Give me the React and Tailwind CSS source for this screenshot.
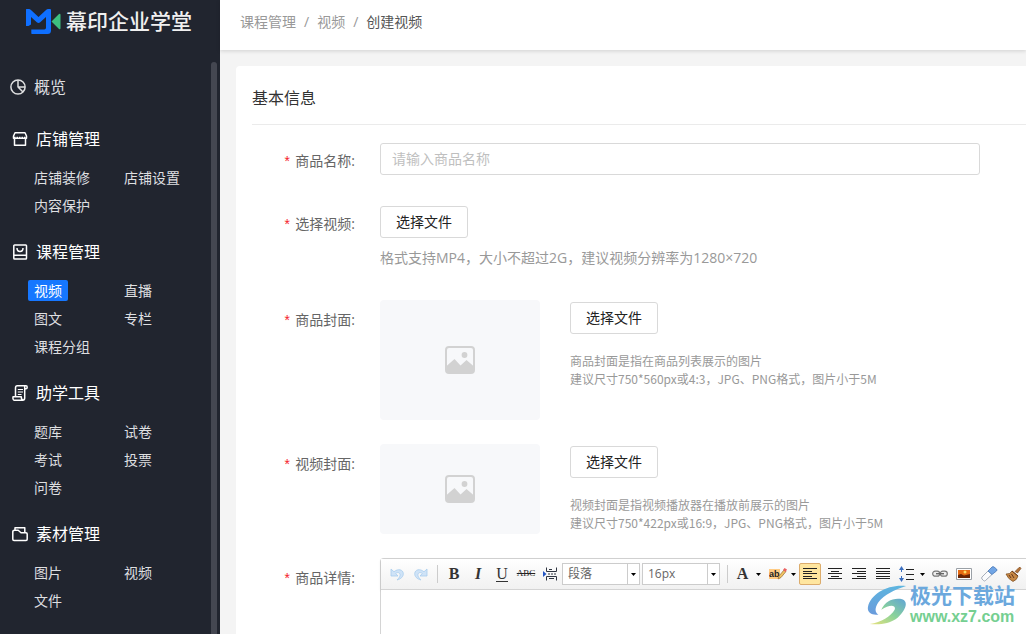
import React from "react";

const stroke = { fill: "none", stroke: "currentColor", strokeWidth: 1.5, strokeLinejoin: "round" };

const PieIcon = () => (
  <svg width="16" height="16" viewBox="0 0 16 16" {...stroke}>
    <circle cx="8" cy="8" r="7.1" />
    <path d="M8 1v7h7M8 8l5 5" />
  </svg>
);
const ShopIcon = () => (
  <svg width="16" height="16" viewBox="0 0 16 16" {...stroke}>
    <path d="M3 1.8h10l1.5 3.2v2.300H1.500V5zM2.500 7.500v6.800h11V7.500" />
    <path d="M2 6.800h12" strokeDasharray="1.500 1" strokeWidth="2.200" />
  </svg>
);
const CourseIcon = () => (
  <svg width="16" height="16" viewBox="0 0 16 16" {...stroke}>
    <rect x="1.8" y="1" width="12.700" height="14" rx="0.8" />
    <path d="M2 11.300h12.500M5 4c0 4.700 6 4.700 6 0" />
  </svg>
);
const ScrollIcon = () => (
  <svg width="16" height="16" viewBox="0 0 16 16" {...stroke}>
    <path d="M3.500 11.500V3c0-1.400.6-2.200 1.800-2.200H14c1.600 0 1.600 3 0 3h-1.300M12.700 1.500V13c0 1.400-.8 2.200-2 2.200H2.300c-1.300 0-1.500-1.700-1.300-3.400h8.300c0 2 .3 3.200 1.700 3.200" />
    <path d="M5.800 4.500H11M5.800 7H11M5.800 9.500h3.700" strokeWidth="1.200" />
  </svg>
);
const FolderIcon = () => (
  <svg width="16" height="16" viewBox="0 0 16 16" {...stroke}>
    <path d="M2.500 4.300h3.700l2.800 2.400h5q1.200 0 1.200 1.200v5.400q0 1.200-1.200 1.200H2q-1.200 0-1.200-1.200V5.500q0-1.200 1.700-1.200z" />
    <path d="M3 4.300V1.800h9.800v4.900" />
  </svg>
);

const sections = [
  { title: "店铺管理", Icon: ShopIcon, items: ["店铺装修", "店铺设置", "内容保护"] },
  { title: "课程管理", Icon: CourseIcon, items: ["视频", "直播", "图文", "专栏", "课程分组"], active: "视频" },
  { title: "助学工具", Icon: ScrollIcon, items: ["题库", "试卷", "考试", "投票", "问卷"] },
  { title: "素材管理", Icon: FolderIcon, items: ["图片", "视频", "文件"] },
];

function Logo() {
  return (
    <div className="flex h-[62px] shrink-0 items-start pl-6 pt-[5px]">
      <svg width="38" height="32" viewBox="0 0 38 32" className="shrink-0">
        <path
          d="M2 21V4.500q0-.5.500-.5H5q1 0 1.700.7L14.500 12l7.800-7.300Q23 4 24 4h2q1 0 1 1v20.500q0 3.500-3.500 3.500H8q-.7 0-.7-.7v-3.800h13q1.700 0 1.700-1.700V12l-5.800 5.300q-1.700 1.400-3.400 0L7 12v7.500L4.500 21z"
          fill="#0f6fff"
        />
        <path d="M27.500 16.500L35 9q1.500-1 1.500 1v13q0 2-1.500 1z" fill="#3dc07f" />
      </svg>
      <span className="ml-1 text-[21px] font-medium leading-8 text-[#f0f0f0]">幕印企业学堂</span>
    </div>
  );
}

function Sidebar() {
  return (
    <aside className="flex w-[220px] shrink-0 flex-col bg-[#21252f] text-[#dedfe0]">
      <Logo />
      <div className="flex min-h-0 grow">
        <nav className="flex min-w-0 grow flex-col gap-[9px] overflow-hidden pt-[5px]">
          <a href="#overview" className="flex h-[39px] items-center gap-2 pl-[10px] text-base">
            <PieIcon />
            概览
          </a>
          {sections.map(({ title, Icon, items, active }) => (
            <section key={title}>
              <h2 className="flex h-12 items-center gap-2 pl-3 text-base text-white">
                <Icon />
                {title}
              </h2>
              <ul className="grid grid-cols-[90px_90px] pl-7 text-sm">
                {items.map((item) => (
                  <li key={item} className="flex h-7 items-center">
                    <a
                      href={"#" + item}
                      className={
                        item === active
                          ? "rounded-xs bg-[#1677ff] px-[6px] leading-[21px] text-white"
                          : "whitespace-nowrap px-[6px] leading-[21px]"
                      }
                    >
                      {item}
                    </a>
                  </li>
                ))}
              </ul>
            </section>
          ))}
        </nav>
        <div className="mr-[3px] w-[6px] shrink-0 rounded-t-full bg-[#444751]" />
      </div>
    </aside>
  );
}

function Row({ id, label, className = "", labelHeight = "h-10", children }) {
  return (
    <div className={"flex items-start " + className}>
      <label htmlFor={id} className={"flex w-32 shrink-0 items-center justify-end pr-[25px] text-sm text-[#666] " + labelHeight}>
        <span className="mr-1 pt-1 font-['Liberation_Mono'] text-[#f5222d]">*</span>
        {label}:
      </label>
      {children}
    </div>
  );
}

const FileButton = ({ id }) => (
  <button
    id={id}
    type="button"
    className="flex h-8 w-[88px] items-center justify-center rounded-[3px] border border-[#d9d9d9] bg-white text-sm text-[#222]"
  >
    选择文件
  </button>
);

function Cover({ id, box, line1, line2 }) {
  return (
    <div className="flex">
      <div className={"flex w-40 shrink-0 items-center justify-center rounded bg-[#f7f8fa] " + box}>
        <svg width="30" height="28" viewBox="0 0 30 28">
          <rect x="1" y="1" width="28" height="26" rx="3" fill="none" stroke="#d2d2d2" strokeWidth="2" />
          <path d="M1 20.500L9.500 13l6 6.500 6-5.500 7.500 6.500v4q0 2.500-2.500 2.500h-23Q1 27 1 24.500z" fill="#d2d2d2" />
          <circle cx="19.500" cy="9" r="2.900" fill="#d2d2d2" />
        </svg>
      </div>
      <div className="ml-[30px] pt-[2px]">
        <FileButton id={id} />
        <p className="mt-[18px] whitespace-nowrap font-['Noto_Sans_CJK_SC',sans-serif] text-xs leading-[18px] text-[#999]">
          {line1}
          <br />
          {line2}
        </p>
      </div>
    </div>
  );
}

const Tool = ({ label, className = "w-6", children }) => (
  <button
    type="button"
    aria-label={label}
    className={"flex h-[22px] shrink-0 items-center justify-center font-['Liberation_Serif'] text-base text-[#333] " + className}
  >
    {children}
  </button>
);

const Caret = () => (
  <svg width="5" height="3" viewBox="0 0 5 3" className="shrink-0">
    <path d="M0 0h5L2.500 3z" fill="#000" />
  </svg>
);

const Separator = ({ className }) => (
  <span className={"flex shrink-0 justify-center " + className}>
    <span className="h-[18px] w-px bg-[#ccc]" />
  </span>
);

const Lines = ({ d }) => (
  <svg width="14" height="12" viewBox="0 0 14 12">
    <path d={d} stroke="#222" strokeWidth="1" fill="none" />
  </svg>
);

const ToolSelect = ({ label, value }) => (
  <span className="relative mr-[2px] flex h-[22px] w-[78px] shrink-0 border border-[#ccc] bg-white">
    <select aria-label={label} defaultValue={value} className="w-full appearance-none bg-transparent pl-[5px] text-xs leading-5 text-[#666]">
      <option>{value}</option>
    </select>
    <span className="pointer-events-none absolute inset-y-0 right-0 flex w-3 items-center justify-center border-l border-[#ccc]">
      <Caret />
    </span>
  </span>
);

const Undo = ({ flip }) => (
  <svg width="14" height="13" viewBox="0 0 14 13" className={flip ? "-scale-x-100" : ""}>
    <path d="M1 1v7h7L5.700 5.500C8 3.500 10.500 5 10 7.500c-.3 1.700-1.500 3-3 4.500 4-1 6.500-3.500 6.300-6.500C13 1.500 8 .2 4 3.800z" fill="#cfe3f7" stroke="#a8cdee" strokeWidth="0.8" />
  </svg>
);

function Editor() {
  return (
    <div className="flex h-full min-w-0 grow flex-col rounded-tl border-l border-t border-[#d4d4d4]">
      <div className="flex h-[31px] shrink-0 items-center overflow-hidden border-b border-[#d4d4d4] bg-linear-to-b from-white to-[#f1f1f1] pl-1 shadow-sm">
        <Tool label="撤销"><Undo /></Tool>
        <Tool label="重做"><Undo flip /></Tool>
        <Separator className="w-[9px]" />
        <Tool label="加粗"><b>B</b></Tool>
        <Tool label="斜体"><b><i>I</i></b></Tool>
        <Tool label="下划线"><span className="border-b border-[#333] leading-[14px]">U</span></Tool>
        <Tool label="删除线"><span className="text-[9px] text-[#222] line-through">ABC</span></Tool>
        <Tool label="分页">
          <svg width="15" height="14" viewBox="0 0 15 14">
            <path d="M0 4l3.500 3L0 10z" fill="#2456c4" />
            <path d="M3.500.5v4h10v-4M3.500 13.500v-4h10v4" fill="none" stroke="#303642" />
            <path d="M5 7h2m1 0h2m1 0h2M6 2.500h3M6 11.500h5" fill="none" stroke="#303642" />
          </svg>
        </Tool>
        <ToolSelect label="段落格式" value="段落" />
        <ToolSelect label="字号" value="16px" />
        <Separator className="w-[10px]" />
        <Tool label="字体颜色" className="w-[34px] gap-2"><b>A</b><Caret /></Tool>
        <Tool label="背景色" className="w-8 gap-1">
          <svg width="18" height="14" viewBox="0 0 18 14">
            <rect y="2" width="11" height="10" fill="#ffcb83" />
            <text x="0" y="10" fontSize="9" fontWeight="bold" fontFamily="Liberation Sans" fill="#222">ab</text>
            <path d="M9 12l1-3 5-6 2 1.500-5 6z" fill="#f0c463" stroke="#966b35" strokeWidth="0.7" />
            <path d="M14 3l1.500-2L18 2.500 16.500 5z" fill="#ea6060" />
          </svg>
          <Caret />
        </Tool>
        <Tool label="左对齐" className="ml-px mr-[2px] w-[22px] rounded-xs border border-[#dcac6c] bg-[#ffe69f]">
          <Lines d="M0 .5h14M0 3.500h9M0 5.500h14M0 8.500h9M0 10.500h14" />
        </Tool>
        <Tool label="居中"><Lines d="M0 .5h14M3 3.500h8M0 5.500h14M3 8.500h8M0 10.500h14" /></Tool>
        <Tool label="右对齐"><Lines d="M0 .5h14M5 3.500h9M0 5.500h14M5 8.500h9M0 10.500h14" /></Tool>
        <Tool label="两端对齐"><Lines d="M0 .5h14M0 3.500h14M0 5.500h14M0 8.500h14M0 10.500h14" /></Tool>
        <Tool label="行间距" className="w-[33px] gap-[5px]">
          <svg width="16" height="16" viewBox="0 0 16 16">
            <path d="M0 4l2.500-4L5 4zM0 12l2.500 4L5 12zM2 4h1v2H2zM2 10h1v2H2z" fill="#3b6fc0" />
            <path d="M7 3.500h8M7 8.500h8M7 13.500h8" stroke="#222" />
          </svg>
          <Caret />
        </Tool>
        <Tool label="链接">
          <svg width="16" height="8" viewBox="0 0 16 8">
            <rect x=".7" y="1.200" width="7" height="5" rx="2.500" fill="#eee" stroke="#777" strokeWidth="1.200" />
            <rect x="8.300" y="1.200" width="7" height="5" rx="2.500" fill="#eee" stroke="#777" strokeWidth="1.200" />
            <path d="M4 3.700h8" stroke="#666" strokeWidth="1.400" />
          </svg>
        </Tool>
        <Tool label="图片">
          <svg width="16" height="12" viewBox="0 0 16 12">
            <path d="M.5.500h15v11H.5z" fill="#fff" stroke="#9aa0a6" />
            <path d="M2 2h12v8H2z" fill="#e66a12" />
            <path d="M2 7l3-1 3 1.500L14 6v4H2z" fill="#6a2606" />
            <circle cx="9" cy="4" r="1.500" fill="#ffdc62" />
          </svg>
        </Tool>
        <Tool label="清除格式" className="w-[26px]">
          <svg width="17" height="16" viewBox="0 0 17 16">
            <path d="M1 11l6-6 4 3.500-6.500 6q-1 1-2 0L1 13q-.8-1 0-2z" fill="#fafbfd" stroke="#929ba8" strokeWidth="0.8" />
            <path d="M7 5l4-4q1-.8 2 0l2.500 2q1 1 0 2L11 8.500z" fill="#71a5e5" stroke="#4778b8" strokeWidth="0.8" />
          </svg>
        </Tool>
        <Tool label="格式刷" className="w-[22px]">
          <svg width="17" height="15" viewBox="0 0 17 15">
            <path d="M10 4.500L14 .5q1.500-.6 2 1L12.500 6z" fill="#b4733a" stroke="#794717" strokeWidth="0.6" />
            <path d="M1 7q4 .5 6-3l6 5q-1 4-5 5.500Q3 12 1 7z" fill="#c78845" stroke="#794717" strokeWidth="0.7" />
            <path d="M7 4l6 5M4 8l2 3M6.500 7l2.500 4" stroke="#69381a" />
          </svg>
        </Tool>
      </div>
      <textarea id="detail" className="w-full grow resize-none bg-white p-2 outline-none" />
    </div>
  );
}

function Watermark() {
  return (
    <div className="pointer-events-none absolute bottom-2 right-[11px] flex items-center gap-[3px] font-['Liberation_Sans','Noto_Sans_CJK_SC',sans-serif]">
      <svg width="40" height="40" viewBox="0 0 42 42">
        <defs>
          <linearGradient id="swoosh" x1="0" y1="0" x2="0" y2="1">
            <stop offset="0" stopColor="#5db5df" />
            <stop offset="1" stopColor="#6a9bdc" />
          </linearGradient>
          <linearGradient id="tail" x1="1" y1="0" x2="0" y2="1">
            <stop offset="0" stopColor="#5fa4d6" />
            <stop offset=".5" stopColor="#8ad39a" />
            <stop offset="1" stopColor="#e9e27c" />
          </linearGradient>
        </defs>
        <path d="M41 1C22-1 4 9 1 23c-1 6 4 9 11 8-4-2-4-7 0-13C18 10 29 5 41 1z" fill="url(#swoosh)" />
        <path d="M15 26c4-9 13-13 22-11 8 3 2 14-7 21-6 4-15 6-27 5 12-2 22-8 26-15 2-5-5-6-14 0z" fill="url(#tail)" />
      </svg>
      <div className="flex flex-col">
        <span className="text-[21px] font-bold leading-6 text-[#6ba8dd]">极光下载站</span>
        <span className="text-base font-bold leading-[18px] text-[#75cf91]">www.xz7.com</span>
      </div>
    </div>
  );
}

export default function App() {
  return (
    <div className="relative flex h-screen overflow-hidden bg-[#f4f4f4] font-['Open_Sans','Noto_Sans_CJK_SC',sans-serif]">
      <Sidebar />
      <div className="flex min-w-0 grow flex-col">
        <header className="z-10 flex h-[50px] shrink-0 bg-white pl-5 pt-[11px] shadow-[0_1px_4px_rgba(0,0,0,0.15)]">
          <nav aria-label="面包屑" className="flex h-[22px] items-center gap-2 text-sm text-[#999]">
            <a href="#course">课程管理</a>
            <span>/</span>
            <a href="#video">视频</a>
            <span>/</span>
            <span className="text-[#555]">创建视频</span>
          </nav>
        </header>
        <main className="flex min-h-0 grow flex-col pl-4 pt-4">
          <form className="flex min-h-0 grow flex-col overflow-hidden rounded-tl bg-white pl-4">
            <h1 className="flex h-[59px] shrink-0 items-center border-b border-[#ebebeb] pt-[6px] text-base text-[#333]">基本信息</h1>
            <div className="flex min-h-0 grow flex-col gap-6 pt-[18px]">
              <Row id="name" label="商品名称" className="min-h-[39px]" labelHeight="h-9">
                <input
                  id="name"
                  type="text"
                  placeholder="请输入商品名称"
                  className="h-8 min-w-0 max-w-[600px] grow rounded-[3px] border border-[#d9d9d9] px-[11px] pb-[2px] text-sm placeholder:text-[#bfbfbf]"
                />
              </Row>
              <Row id="video-file" label="选择视频" className="min-h-[70px]" labelHeight="h-9">
                <div>
                  <FileButton id="video-file" />
                  <p className="mt-[9px] whitespace-nowrap text-sm leading-[22px] text-[#999]">格式支持MP4，大小不超过2G，建议视频分辨率为1280×720</p>
                </div>
              </Row>
              <Row id="goods-cover" label="商品封面">
                <Cover
                  id="goods-cover"
                  box="h-[120px]"
                  line1="商品封面是指在商品列表展示的图片"
                  line2="建议尺寸750*560px或4:3，JPG、PNG格式，图片小于5M"
                />
              </Row>
              <Row id="video-cover" label="视频封面">
                <Cover
                  id="video-cover"
                  box="h-[90px]"
                  line1="视频封面是指视频播放器在播放前展示的图片"
                  line2="建议尺寸750*422px或16:9，JPG、PNG格式，图片小于5M"
                />
              </Row>
              <Row id="detail" label="商品详情" className="min-h-[76px] grow">
                <Editor />
              </Row>
            </div>
          </form>
        </main>
      </div>
      <Watermark />
    </div>
  );
}
